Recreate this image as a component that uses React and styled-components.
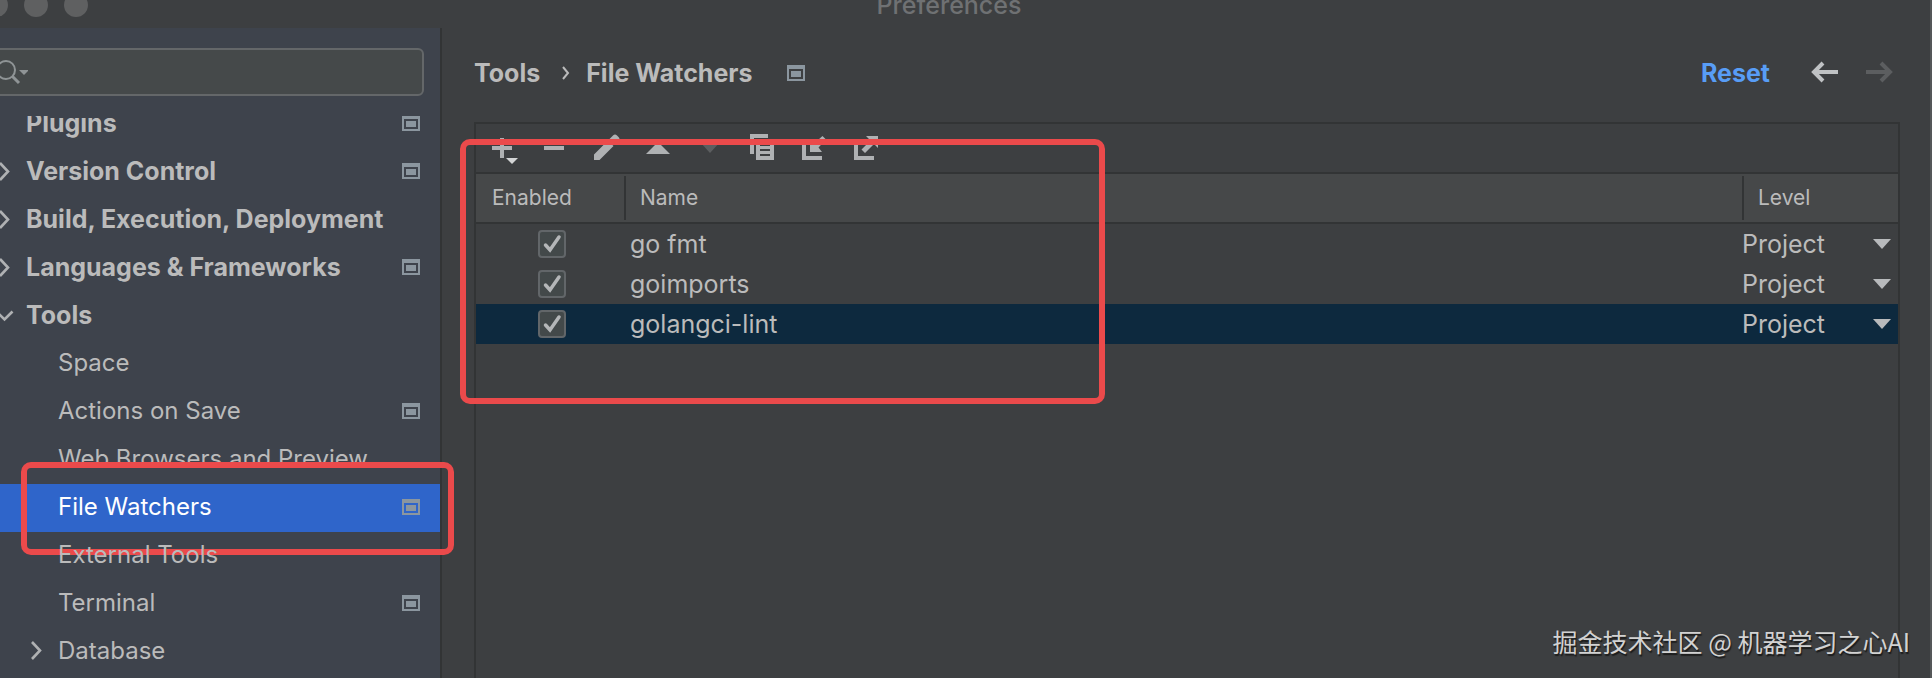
import React from "react";
import styled, { createGlobalStyle, css } from "styled-components";

const c = {
  bg: "#3d3f41",
  side: "#3e434c",
  line: "#323435",
  text: "#bbbbbb",
  icon: "#afb1b3",
  dim: "#5c5e60",
  mark: "#eb4a4b",
};

const Global = createGlobalStyle`
  *, *::before, *::after { box-sizing: border-box; }
  body { margin: 0; background: ${c.bg}; }
  button, input, select { font: inherit; color: inherit; }
`;

const Window = styled.div`
  min-height: 100vh;
  display: flex;
  flex-direction: column;
  overflow: hidden;
  background: ${c.bg};
  border-right: 2px solid #555759;
  color: ${c.text};
  font: 400 25px/32px Inter, "Liberation Sans", sans-serif;
`;

const TitleBar = styled.header`
  display: grid;
  grid-template-columns: 1fr auto 1fr;
  align-items: center;
  height: 46px;
  margin-top: -18px;
  padding-right: 32px;
`;

const Lights = styled.div`
  display: flex;
  gap: 16px;
  margin-left: -16px;
`;

const Light = styled.button`
  width: 24px;
  height: 24px;
  padding: 0;
  border: 0;
  border-radius: 50%;
  background: #5f6061;
`;

const Title = styled.h1`
  margin: 0;
  font-size: 25px;
  font-weight: 500;
  color: #6f7173;
`;

const Body = styled.div`
  flex: 1;
  display: flex;
`;

const Sidebar = styled.aside`
  position: relative;
  z-index: 1;
  flex: 0 0 442px;
  background: ${c.side};
  border-right: 2px solid ${c.line};
`;

const Search = styled.label`
  display: flex;
  align-items: center;
  height: 48px;
  margin: 20px 16px 20px -16px;
  padding-left: 10px;
  background: #45494a;
  border: 2px solid #646769;
  border-radius: 6px;
`;

const SearchInput = styled.input`
  flex: 1;
  min-width: 0;
  border: 0;
  outline: 0;
  background: transparent;
`;

const TreeView = styled.nav`
  display: flow-root;
  clip-path: inset(0 -20px 0 0);
`;

const Tree = styled.ul`
  list-style: none;
  margin: -16px 0 0;
  padding: 0;
`;

const TreeRow = styled.li`
  position: relative;
  background: ${(p) => (p.$selected ? "#2f65ca" : "transparent")};
`;

const TreeLink = styled.a`
  display: flex;
  align-items: center;
  height: 48px;
  padding: 0 20px 2px ${(p) => p.$level * 32}px;
  color: ${(p) => (p.$selected ? "#ffffff" : c.text)};
  font-weight: ${(p) => (p.$level ? 400 : 700)};
  font-size: ${(p) => (p.$level ? 24 : 25)}px;
  white-space: nowrap;
  text-decoration: none;
`;

const Twisty = styled.span`
  flex: 0 0 24px;
  height: 24px;
  margin: 0 10px 0 -8px;
`;

const Grow = styled.span`
  flex: 1;
`;

const Highlight = styled.div`
  position: absolute;
  border: 6px solid ${c.mark};
  border-radius: 10px;
  pointer-events: none;
  ${(p) =>
    p.$area === "row"
      ? css`
          inset: -22px -14px -23px 21px;
        `
      : css`
          top: 15px;
          left: -16px;
          width: 645px;
          height: 265px;
        `}
`;

const Main = styled.main`
  flex: 1;
  min-width: 0;
  display: flex;
  flex-direction: column;
  padding: 20px 30px 0 32px;
`;

const Crumbs = styled.div`
  display: flex;
  align-items: center;
  height: 50px;
  margin-bottom: 24px;
  padding-right: 4px;
  font-size: 25px;
  font-weight: 700;
`;

const Crumb = styled.span`
  margin-right: ${(p) => p.$after}px;
`;

const CrumbArrow = styled.span`
  display: flex;
  margin-right: 16px;
`;

const Reset = styled.a`
  margin-right: 38px;
  color: #589df6;
  text-decoration: none;
`;

const NavButton = styled.button`
  display: flex;
  width: 32px;
  height: 32px;
  margin-left: ${(p) => (p.$second ? 24 : 0)}px;
  padding: 0;
  border: 0;
  background: none;
  color: ${(p) => (p.disabled ? c.dim : "#c0c2c4")};
`;

const Panel = styled.section`
  position: relative;
  flex: 1;
  border: 2px solid ${c.line};
  border-bottom: 0;
`;

const Toolbar = styled.div`
  display: flex;
  align-items: center;
  gap: 20px;
  height: 50px;
  padding-left: 10px;
  border-bottom: 2px solid ${c.line};
`;

const ToolButton = styled.button`
  display: flex;
  width: 32px;
  height: 32px;
  padding: 0;
  border: 0;
  background: none;
  color: ${(p) => (p.disabled ? c.dim : c.icon)};
`;

const Table = styled.table`
  width: 100%;
  table-layout: fixed;
  border-collapse: separate;
  border-spacing: 0;
`;

const Col = styled.col`
  width: ${(p) => p.$w};
`;

const HeadCell = styled.th`
  height: 50px;
  padding: 0;
  background: #464849;
  border-bottom: 2px solid ${c.line};
  font-size: 21px;
  font-weight: 400;
  text-align: left;
`;

const HeadLabel = styled.div`
  height: 44px;
  padding-left: ${(p) => (p.$divided ? 14 : 16)}px;
  line-height: 44px;
  border-left: ${(p) => (p.$divided ? `2px solid ${c.line}` : 0)};
`;

const Row = styled.tr`
  background: ${(p) => (p.$selected ? "#0d293e" : "transparent")};
`;

const Cell = styled.td`
  height: 40px;
  padding: 0 0 0 ${(p) => p.$pad}px;
`;

const Stack = styled.span`
  display: grid;
  align-items: center;
  width: ${(p) => p.$w};
  & > * {
    grid-area: 1 / 1;
  }
  & > svg {
    justify-self: end;
    pointer-events: none;
  }
`;

const Check = styled.input`
  appearance: none;
  width: 28px;
  height: 28px;
  margin: 0;
  background: #43494a;
  border: 2px solid #626669;
  border-radius: 4px;
`;

const Level = styled.select`
  appearance: none;
  width: 100%;
  height: 36px;
  padding: 0;
  border: 0;
  background: transparent;
`;

const Watermark = styled.footer`
  position: absolute;
  right: 22px;
  bottom: 19px;
  color: #d2d2d2;
  font: 400 25px/36px "Noto Sans CJK SC", sans-serif;
  text-shadow: 1px 2px 1px #1c1c1c;
`;

const Svg = ({ w, h = w, children }) => (
  <svg width={w} height={h} viewBox={`0 0 ${w} ${h}`} fill="none" aria-hidden="true">
    {children}
  </svg>
);

const ProjectIcon = () => (
  <Svg w={18} h={16}>
    <path fillRule="evenodd" fill="#8b969f" d="M0 0H18V16H0zM2 4V14H16V4z" />
    <path fill="#8b969f" d="M4 6H14V12H4z" />
  </Svg>
);

const Chevron = ({ open }) => (
  <Svg w={24}>
    <path
      stroke={c.icon}
      strokeWidth="2.6"
      d={open ? "M4.5 7.5L12.5 15.5L20.5 7.5" : "M8 3L16 11.5L8 20"}
    />
  </Svg>
);

const toolIcons = {
  Add: (
    <>
      <path d="M14 6H18V14H26V18H18V26H14V18H6V14H14z" />
      <path fill="#d4d5d6" d="M20 26H32L26 32z" />
    </>
  ),
  Remove: <path d="M6 14H26V18H6z" />,
  Edit: (
    <path d="M4 22.5L18 8.5L23.5 14L9.5 28H4zM19.5 7L23 3.5Q25 1.5 27 3.5L28.5 5Q30.5 7 28.5 9L25 12.5z" />
  ),
  "Move up": <path d="M16 10L28 22H4z" />,
  "Move down": <path d="M6 10H26L16 21z" />,
  Copy: (
    <path
      fillRule="evenodd"
      d="M4 2H22V6H8V22H4zM10 8H28V28H10zM14 12V14H24V12zM14 17V19H24V17zM14 22V24H24V22z"
    />
  ),
  Import: <path d="M4 8H8V24H24V28H4zM12 8L16 11.5L24.5 4L28 7.5L20.5 15.5L24 20H12z" />,
  Export: <path d="M4 8H8V24H24V28H4zM16 4H28V16L24 12L15 21L11.5 17.5L20.5 8.5z" />,
};

const tree = [
  { name: "Plugins", mark: true },
  { name: "Version Control", twisty: true, mark: true },
  { name: "Build, Execution, Deployment", twisty: true },
  { name: "Languages & Frameworks", twisty: true, mark: true },
  { name: "Tools", twisty: true, open: true },
  { name: "Space", level: 1 },
  { name: "Actions on Save", level: 1, mark: true },
  { name: "Web Browsers and Preview", level: 1 },
  { name: "File Watchers", level: 1, mark: true, selected: true },
  { name: "External Tools", level: 1 },
  { name: "Terminal", level: 1, mark: true },
  { name: "Database", level: 1, twisty: true },
];

const watchers = ["go fmt", "goimports", "golangci-lint"];

export default function App() {
  return (
    <Window>
      <Global />
      <TitleBar>
        <Lights>
          <Light aria-label="Close" />
          <Light aria-label="Minimize" />
          <Light aria-label="Zoom" />
        </Lights>
        <Title>Preferences</Title>
      </TitleBar>
      <Body>
        <Sidebar>
          <Search>
            <Svg w={32} h={28}>
              <circle cx="10" cy="12" r="9" stroke="#8f9496" strokeWidth="2" />
              <path stroke="#8f9496" strokeWidth="3" d="M16.5 18.5L23 25" />
              <path fill="#8f9496" d="M23 12H33L28 17z" />
            </Svg>
            <SearchInput type="text" aria-label="Search settings" />
          </Search>
          <TreeView aria-label="Settings">
            <Tree>
              {tree.map(({ name, level = 0, twisty, open, mark, selected }) => (
                <TreeRow key={name} $selected={selected}>
                  <TreeLink href="#" $level={level} $selected={selected}>
                    <Twisty>{twisty && <Chevron open={open} />}</Twisty>
                    {name}
                    <Grow />
                    {mark && <ProjectIcon />}
                  </TreeLink>
                  {selected && <Highlight $area="row" />}
                </TreeRow>
              ))}
            </Tree>
          </TreeView>
        </Sidebar>
        <Main>
          <Crumbs>
            <Crumb $after={22}>Tools</Crumb>
            <CrumbArrow>
              <Svg w={8} h={16}>
                <path stroke={c.text} strokeWidth="2" d="M1 2L6 8L1 14" />
              </Svg>
            </CrumbArrow>
            <Crumb $after={34}>File Watchers</Crumb>
            <ProjectIcon />
            <Grow />
            <Reset href="#">Reset</Reset>
            <NavButton aria-label="Back">
              <Svg w={32}>
                <path stroke="currentColor" strokeWidth="4" d="M30 15H7M15 6L6 15L15 24" />
              </Svg>
            </NavButton>
            <NavButton aria-label="Forward" $second disabled>
              <Svg w={32}>
                <path stroke="currentColor" strokeWidth="4" d="M2 15H25M17 6L26 15L17 24" />
              </Svg>
            </NavButton>
          </Crumbs>
          <Panel>
            <Toolbar>
              {Object.entries(toolIcons).map(([name, shape]) => (
                <ToolButton key={name} aria-label={name} disabled={name === "Move down"}>
                  <Svg w={32}>
                    <g fill="currentColor">{shape}</g>
                  </Svg>
                </ToolButton>
              ))}
            </Toolbar>
            <Table>
              <colgroup>
                <Col $w="148px" />
                <Col $w="auto" />
                <Col $w="156px" />
              </colgroup>
              <thead>
                <tr>
                  {["Enabled", "Name", "Level"].map((label, i) => (
                    <HeadCell key={label} scope="col">
                      <HeadLabel $divided={i > 0}>{label}</HeadLabel>
                    </HeadCell>
                  ))}
                </tr>
              </thead>
              <tbody>
                {watchers.map((name, i) => (
                  <Row key={name} $selected={i === 2}>
                    <Cell $pad={62}>
                      <Stack $w="28px">
                        <Check type="checkbox" defaultChecked aria-label={`Enable ${name}`} />
                        <Svg w={28}>
                          <path
                            stroke="#b4b6b8"
                            strokeWidth="3.5"
                            strokeLinecap="round"
                            d="M7.5 15L12 20L21 7"
                          />
                        </Svg>
                      </Stack>
                    </Cell>
                    <Cell $pad={6}>{name}</Cell>
                    <Cell $pad={0}>
                      <Stack $w="100%">
                        <Level aria-label={`Level of ${name}`} defaultValue="Project">
                          <option>Project</option>
                          <option>Global</option>
                        </Level>
                        <Svg w={25} h={10}>
                          <path fill="#b8babc" d="M0 0H18L9 10z" />
                        </Svg>
                      </Stack>
                    </Cell>
                  </Row>
                ))}
              </tbody>
            </Table>
            <Highlight $area="table" />
          </Panel>
        </Main>
      </Body>
      <Watermark>掘金技术社区 @ 机器学习之心AI</Watermark>
    </Window>
  );
}
